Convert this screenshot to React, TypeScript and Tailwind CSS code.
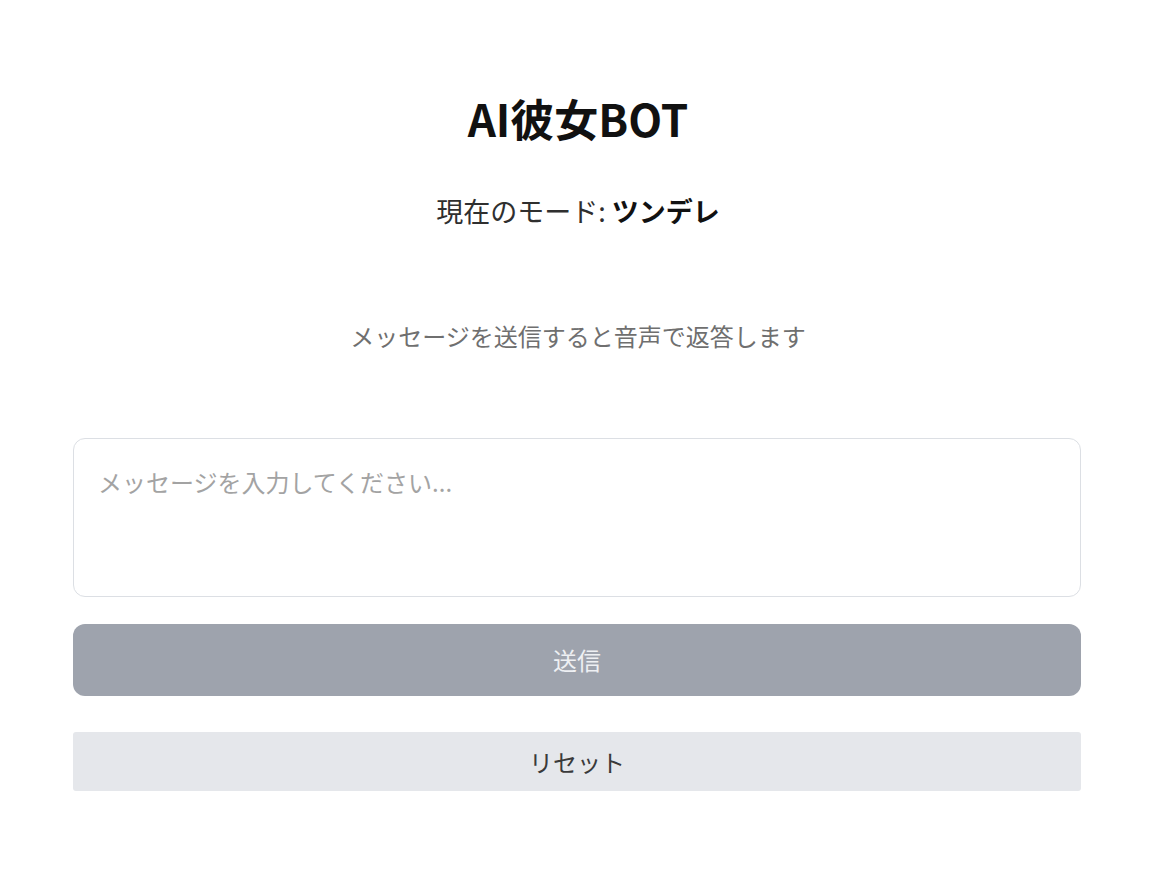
import { useState } from "react"

const App: React.FC = () => {
    const [message, setMessage] = useState<string>("")
    const mode = "ツンデレ"

    return (
        <div className="min-h-screen bg-white font-['Noto_Sans_CJK_JP','Noto_Sans',sans-serif]">
            <main className="flex flex-col items-center px-[73px] pt-[88px]">
                <h1 className="text-[44px] leading-[60px] font-bold text-[#111]">AI彼女BOT</h1>
                <p className="mt-[45px] text-[27px] leading-[36px] text-[#2f2f2f]">
                    現在のモード: <span className="font-bold text-[#111]">{mode}</span>
                </p>
                <p className="mt-[89px] text-[24px] leading-[36px] text-[#6f6f6f]">
                    メッセージを送信すると音声で返答します
                </p>

                <section className="mt-[84px] flex w-[1008px] max-w-full flex-col self-start">
                    <textarea
                        value={message}
                        onChange={(e) => setMessage(e.target.value)}
                        placeholder="メッセージを入力してください..."
                        className="h-[159px] w-full resize-none rounded-[12px] border border-[#dcdfe4] px-[24px] py-[25px] text-[24px] leading-[36px] text-[#222] placeholder:text-[#a3a3a3] outline-none"
                    />
                    <button
                        disabled={message.trim() === ""}
                        className="mt-[27px] h-[72px] w-full rounded-[12px] bg-[#9ea3ad] text-[24px] text-[#eef0f3]"
                    >
                        送信
                    </button>
                    <button
                        onClick={() => setMessage("")}
                        className="mt-[36px] h-[59px] w-full rounded-[3px] bg-[#e5e7eb] text-[24px] text-[#3a3a3a]"
                    >
                        リセット
                    </button>
                </section>
            </main>
        </div>
    )
}

export default App
